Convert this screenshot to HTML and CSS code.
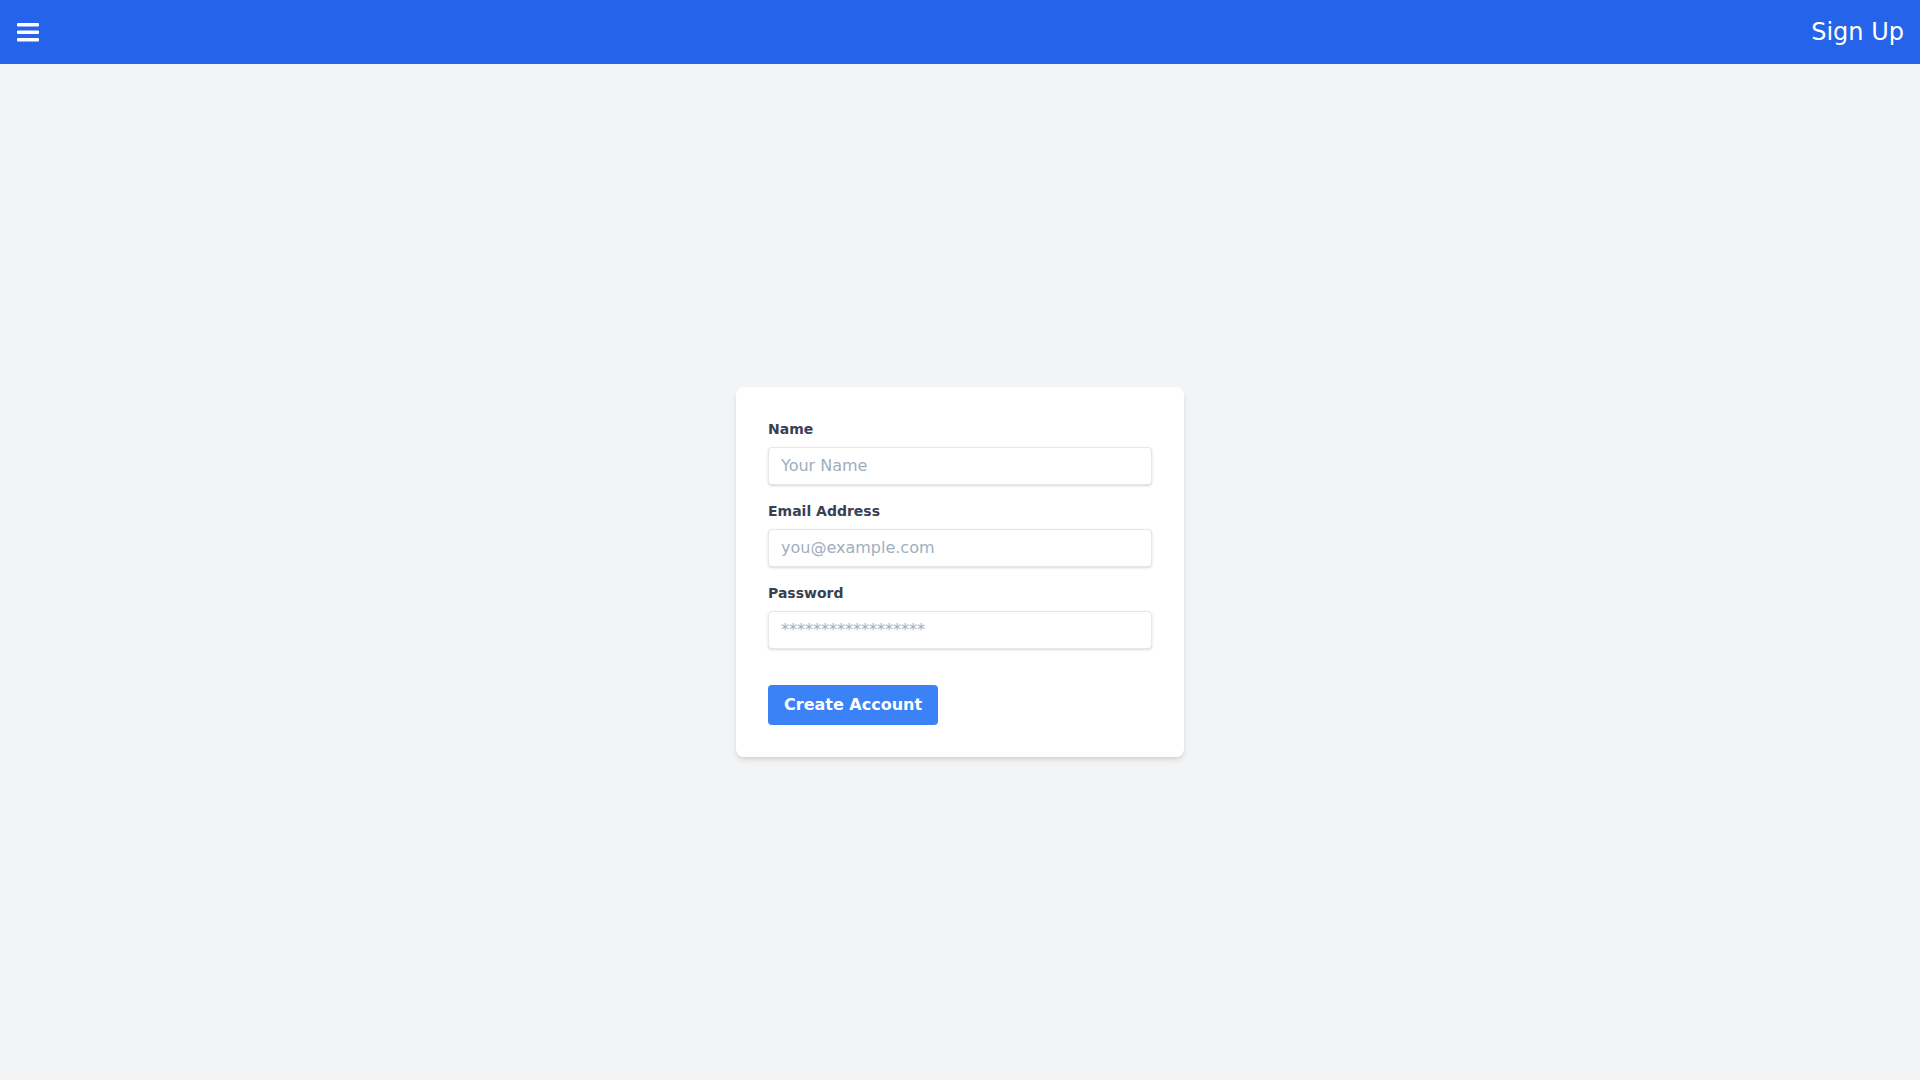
FILE: index.html
```html
<!DOCTYPE html>
<html lang="en">
<head>
<meta charset="utf-8">
<title>Sign Up</title>
<link rel="stylesheet" href="styles.css">
</head>
<body>
<header class="topbar">
  <button class="menu-btn" aria-label="Menu">
    <svg width="22" height="19" viewBox="0 0 22 19"><rect x="0" y="0" width="22" height="3.5" rx="1"/><rect x="0" y="7.5" width="22" height="3.5" rx="1"/><rect x="0" y="15" width="22" height="3.5" rx="1"/></svg>
  </button>
  <span class="title">Sign Up</span>
</header>
<main class="main">
  <form class="card">
    <div class="field">
      <label class="label" for="name">Name</label>
      <input class="input" id="name" type="text" placeholder="Your Name">
    </div>
    <div class="field">
      <label class="label" for="email">Email Address</label>
      <input class="input" id="email" type="email" placeholder="you@example.com">
    </div>
    <div class="field field-last">
      <label class="label" for="password">Password</label>
      <input class="input input-pw" id="password" type="password" placeholder="******************">
    </div>
    <div class="actions">
      <button class="btn" type="button">Create Account</button>
    </div>
  </form>
</main>
</body>
</html>
```
FILE: styles.css
```css
* { box-sizing: border-box; }
html, body { margin: 0; padding: 0; }
body {
  font-family: "DejaVu Sans", sans-serif;
  background: #f3f4f6;
  min-height: 100vh;
  display: flex;
  flex-direction: column;
}
.topbar {
  height: 64px;
  background: #2563eb;
  color: #fff;
  display: flex;
  align-items: center;
  justify-content: space-between;
  padding: 0 16px 0 17px;
}
.menu-btn {
  background: none;
  border: 0;
  padding: 0;
  margin: 0;
  display: flex;
  align-items: center;
  fill: #fff;
  cursor: pointer;
  margin-top: 1px;
}
.title {
  font-size: 24px;
  line-height: 32px;
}
.main {
  flex: 1;
  display: flex;
  align-items: center;
  justify-content: center;
}
.card {
  width: 448px;
  background: #fff;
  border-radius: 8px;
  box-shadow: 0 4px 6px -1px rgba(0,0,0,0.1), 0 2px 4px -1px rgba(0,0,0,0.06);
  padding: 32px;
}
.field {
  display: flex;
  flex-direction: column;
  margin-bottom: 16px;
}
.field-last { margin-bottom: 24px; }
.label {
  display: block;
  font-size: 14px;
  line-height: 20px;
  font-weight: bold;
  color: #374151;
  margin-bottom: 8px;
}
.input {
  display: block;
  width: 100%;
  font-family: "DejaVu Sans", sans-serif;
  font-size: 16px;
  line-height: 20px;
  padding: 8px 12px;
  border: 1px solid #e5e7eb;
  border-radius: 4px;
  box-shadow: 0 1px 3px 0 rgba(0,0,0,0.1), 0 1px 2px 0 rgba(0,0,0,0.06);
  color: #374151;
  outline: none;
  background: #fff;
}
.input::placeholder { color: #a0aec0; opacity: 1; }
.input-pw { margin-bottom: 12px; }
.actions { display: flex; }
.btn {
  font-family: "DejaVu Sans", sans-serif;
  font-size: 16px;
  line-height: 24px;
  font-weight: bold;
  color: #fff;
  background: #3b82f6;
  border: 0;
  border-radius: 4px;
  padding: 8px 16px;
  cursor: pointer;
}
```
